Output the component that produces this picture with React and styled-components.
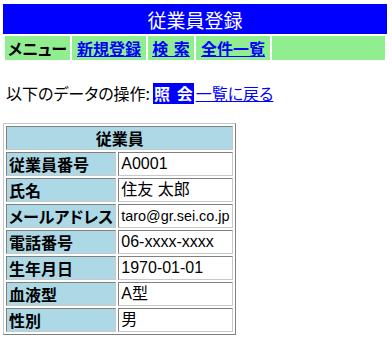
import React from 'react';
import styled, { createGlobalStyle } from 'styled-components';

const GlobalStyle = createGlobalStyle`
  body {
    margin: 0;
    background: #ffffff;
    font-family: 'Noto Sans CJK JP', sans-serif;
    font-size: 16px;
    color: #000000;
  }
`;

const Page = styled.div`
  width: 384px;
  padding: 4px 0 0 3px;
`;

const Title = styled.div`
  height: 30px;
  background: #0000ff;
  color: #ffffff;
  font-size: 19px;
  display: flex;
  align-items: center;
  justify-content: center;
`;

const Menu = styled.div`
  display: grid;
  grid-template-columns: 65px 74px 46px 74px 1fr;
  gap: 2px;
  padding: 2px;
`;

const MenuCell = styled.div`
  height: 24px;
  background: #90ee90;
  display: flex;
  align-items: center;
  justify-content: center;
  font-weight: bold;
  font-size: 16px;
  word-spacing: 2px;
  font-feature-settings: ${({ kana }) => (kana ? "'palt'" : 'normal')};
  white-space: nowrap;
`;

const MenuLink = styled.a`
  color: #0000ff;
  text-decoration: underline;
`;

const OpLine = styled.div`
  margin-top: 21px;
  padding-left: 3px;
  line-height: 21px;
  height: 21px;
  font-feature-settings: 'palt';
  white-space: nowrap;
`;

const Current = styled.span`
  display: inline-block;
  height: 21px;
  padding: 0 1px;
  margin: 0 2px 0 3px;
  background: #0000ff;
  color: #ffffff;
  font-weight: bold;
  word-spacing: 3px;
  font-feature-settings: normal;
`;

const BackLink = styled.a`
  color: #0000ff;
  text-decoration: underline;
`;

const Table = styled.table`
  margin-top: 19px;
  border-collapse: separate;
  border-spacing: 2px;
  border: 1px solid;
  border-color: #c8c8c8 #808080 #808080 #c8c8c8;
`;

const Cell = styled.td`
  box-sizing: border-box;
  height: 24px;
  padding: 0 2px;
  line-height: 22px;
  border: 1px solid;
  border-color: #808080 #c8c8c8 #c8c8c8 #808080;
  white-space: nowrap;
  background: ${({ head }) => (head ? '#add8e6' : '#ffffff')};
  font-weight: ${({ head }) => (head ? 'bold' : 'normal')};
  text-align: ${({ center }) => (center ? 'center' : 'left')};
  font-family: ${({ head }) =>
    head ? "'Noto Sans CJK JP', sans-serif" : "'Liberation Sans', 'Noto Sans CJK JP', sans-serif"};
  font-size: ${({ small }) => (small ? '14.4px' : '16px')};
  font-feature-settings: 'palt';
  width: ${({ w }) => (w ? `${w}px` : 'auto')};
`;

const rows = [
  ['従業員番号', 'A0001'],
  ['氏名', '住友 太郎'],
  ['メールアドレス', 'taro@gr.sei.co.jp', true],
  ['電話番号', '06-xxxx-xxxx'],
  ['生年月日', '1970-01-01'],
  ['血液型', 'A型'],
  ['性別', '男'],
];

export default function App() {
  return (
    <>
      <GlobalStyle />
      <Page>
        <Title>従業員登録</Title>
        <Menu>
          <MenuCell kana>メニュー</MenuCell>
          <MenuCell><MenuLink href="#">新規登録</MenuLink></MenuCell>
          <MenuCell><MenuLink href="#">検 索</MenuLink></MenuCell>
          <MenuCell><MenuLink href="#">全件一覧</MenuLink></MenuCell>
          <MenuCell />
        </Menu>
        <OpLine>
          以下のデータの操作:<Current>照 会</Current><BackLink href="#">一覧に戻る</BackLink>
        </OpLine>
        <Table>
          <tbody>
            <tr>
              <Cell head center colSpan={2}>従業員</Cell>
            </tr>
            {rows.map(([label, value, small]) => (
              <tr key={label}>
                <Cell head w={108}>{label}</Cell>
                <Cell w={115} small={small}>{value}</Cell>
              </tr>
            ))}
          </tbody>
        </Table>
      </Page>
    </>
  );
}
